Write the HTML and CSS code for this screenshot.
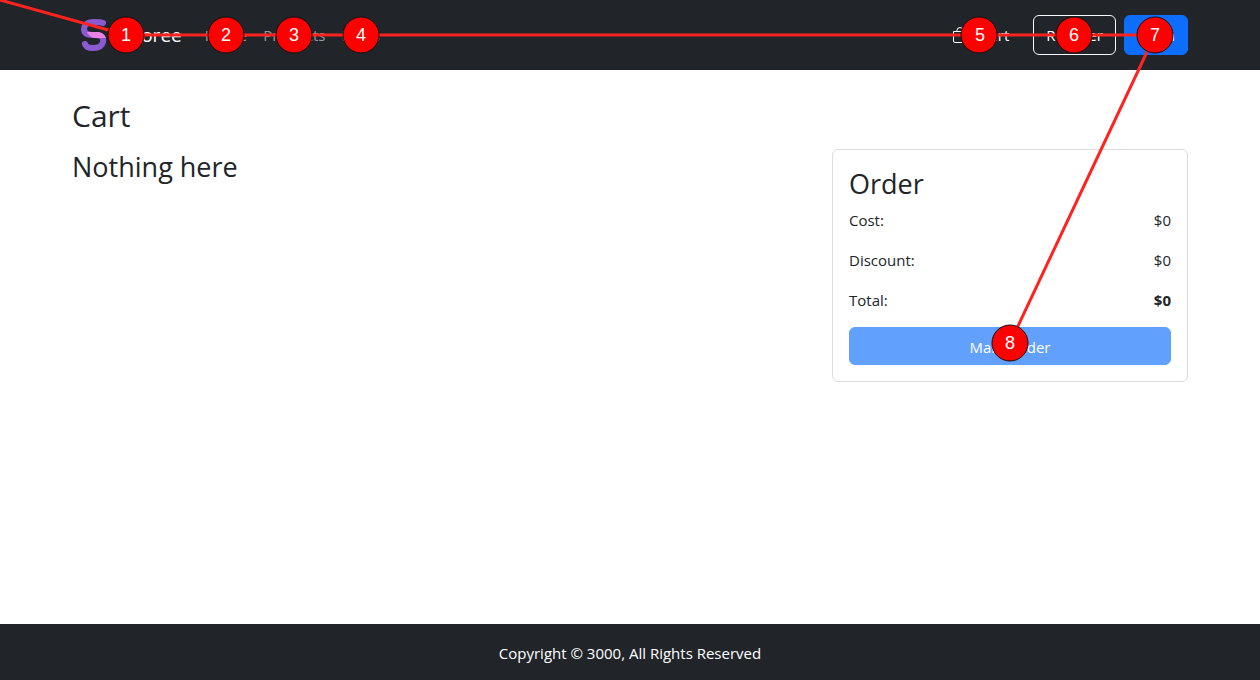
FILE: index.html
```html
<!DOCTYPE html>
<html lang="en">
<head>
<meta charset="utf-8">
<title>Storee - Cart</title>
<link rel="stylesheet" href="styles.css">
</head>
<body>
<header class="navbar">
  <div class="container navbar-inner">
    <a class="brand" href="#">
      <svg class="logo" viewBox="0 0 44 40" aria-hidden="true">
        <path d="M31 8 Q29 7 22 7 C14 7 12 11 12 14 C12 19 16 20 21 20" fill="none" stroke="#8a5bd0" stroke-width="6" stroke-linecap="round"/>
        <path d="M22 20 C29 20 32 22 31 27 C30 32 25 33 21 33 Q14 33 13 29" fill="none" stroke="#8a5bd0" stroke-width="6" stroke-linecap="round"/>
        <path d="M15 17 H27 Q32 18 34 23 H22 Q17 22 15 17Z" fill="#e883e3"/>
      </svg>
      <span>Storee</span>
    </a>
    <nav class="nav">
      <a href="#">Home</a>
      <a href="#">Products</a>
      <a href="#">Deals</a>
    </nav>
    <div class="actions">
      <a class="cart-link" href="#">
        <svg class="bag" viewBox="0 0 16 16" aria-hidden="true"><path d="M1.500 4.500h13V14a1.500 1.500 0 0 1-1.500 1.500H3A1.500 1.500 0 0 1 1.500 14zM5 4.500V3.500a3 3 0 0 1 6 0v1" fill="none" stroke="currentColor"/></svg>
        <span>Cart</span>
      </a>
      <button class="btn btn-outline" type="button">Register</button>
      <button class="btn btn-primary" type="button">Login</button>
    </div>
  </div>
</header>
<main class="container main">
  <h1>Cart</h1>
  <div class="columns">
    <h2>Nothing here</h2>
    <section class="card">
      <h2>Order</h2>
      <dl class="totals">
        <div class="line"><dt>Cost:</dt><dd>$0</dd></div>
        <div class="line"><dt>Discount:</dt><dd>$0</dd></div>
        <div class="line"><dt>Total:</dt><dd class="sum">$0</dd></div>
      </dl>
      <button class="btn btn-order" type="button" disabled>Make order</button>
    </section>
  </div>
</main>
<footer class="footer">Copyright © 3000, All Rights Reserved</footer>
<svg class="focus-path" viewBox="0 0 1260 680" aria-hidden="true">
  <path class="route" d="M0 0L126 35H1155L1010 343"/>
  <g class="stops">
    <circle cx="126" cy="35" r="18"/><circle cx="226" cy="35" r="18"/><circle cx="294" cy="35" r="18"/><circle cx="361" cy="35" r="18"/>
    <circle cx="979" cy="35" r="18"/><circle cx="1074" cy="35" r="18"/><circle cx="1155" cy="35" r="18"/><circle cx="1010" cy="343" r="18"/>
  </g>
  <g class="numbers">
    <text x="126" y="41">1</text><text x="226" y="41">2</text><text x="294" y="41">3</text><text x="361" y="41">4</text>
    <text x="980" y="41">5</text><text x="1074" y="41">6</text><text x="1155" y="41">7</text><text x="1010" y="349">8</text>
  </g>
</svg>
</body>
</html>
```
FILE: styles.css
```css
* { box-sizing: border-box; }
body {
  margin: 0;
  min-height: 100vh;
  display: flex;
  flex-direction: column;
  font-family: "Segoe UI", "Open Sans", "Noto Sans", sans-serif;
  font-size: 15px;
  line-height: 24px;
  color: #212529;
  background: #fff;
}
h1, h2, dl, dd { margin: 0; font-weight: 400; }
h1 { font-size: 30px; line-height: 38px; }
h2 { font-size: 27px; line-height: 36px; }
a { color: inherit; text-decoration: none; }
.container { width: 100%; max-width: 1140px; margin: 0 auto; padding: 0 12px; }
.navbar { background: #212529; color: #fff; padding: 15px 0; }
.navbar-inner { display: flex; align-items: center; }
.brand { display: flex; align-items: center; gap: 8px; font-size: 19px; margin-right: 15px; }
.logo { width: 44px; height: 40px; }
.nav { display: flex; color: rgba(255, 255, 255, .55); }
.nav a { padding: 8px; }
.actions { display: flex; align-items: center; gap: 8px; margin-left: auto; }
.cart-link { display: flex; align-items: center; gap: 12px; margin-right: 16px; }
.bag { width: 16px; height: 16px; }
.btn {
  font: inherit;
  color: #fff;
  padding: 7px 12px;
  border: 1px solid #0d6efd;
  border-radius: 6px;
  background: #0d6efd;
}
.btn-outline { background: transparent; border-color: #f8f9fa; }
.main { flex: 1; padding-top: 27px; }
.columns {
  display: grid;
  grid-template-columns: 2fr 1fr;
  align-items: start;
  margin: 14px -12px 0;
}
.columns > h2 { margin-left: 12px; }
.card { border: 1px solid #dcdddd; border-radius: 6px; padding: 16px; margin: 0 12px; }
.totals { margin-top: 6px; }
.line { display: flex; justify-content: space-between; margin-bottom: 16px; }
.line:last-child { margin-bottom: 15px; }
.sum { font-weight: 700; }
.btn-order { display: block; width: 100%; padding: 7px 12px 5px; opacity: .65; }
.footer { background: #212529; color: #fff; text-align: center; padding: 17px 16px 15px; }
.focus-path { position: absolute; top: 0; left: 0; width: 1260px; height: 680px; pointer-events: none; }
.route { fill: none; stroke: #ff231f; stroke-width: 3; }
.stops { fill: #f00; stroke: #111; stroke-width: 1; }
.numbers { fill: #fff; font-family: "Liberation Sans", Arial, sans-serif; font-size: 18px; text-anchor: middle; }
```
